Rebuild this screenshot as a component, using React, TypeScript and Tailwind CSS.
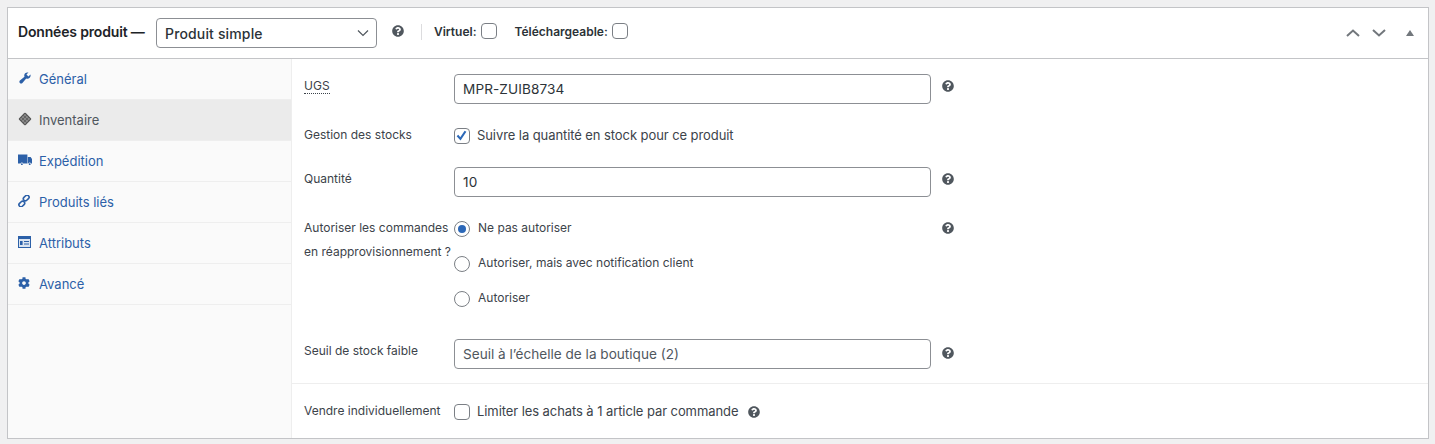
import { ReactNode } from 'react';
import { FaCog, FaQuestionCircle } from 'react-icons/fa';

const font = "font-['Inter','Liberation_Sans',sans-serif]";

function Help({ className = '' }: { className?: string }) {
  return <FaQuestionCircle className={`w-[12px] h-[12px] text-[#50575e] shrink-0 ${className}`} />;
}

function Box({ checked = false }: { checked?: boolean }) {
  return (
    <span className="relative inline-flex w-[16px] h-[16px] shrink-0 rounded-[4px] border border-[#7b7f85] bg-white">
      {checked && (
        <svg viewBox="0 0 16 16" className="absolute inset-0 w-[14px] h-[14px]">
          <path d="M2.8 7.5l3.4 3.8L12 2.6" fill="none" stroke="#2c68b8" strokeWidth="2.4" />
        </svg>
      )}
    </span>
  );
}

function Radio({ checked = false }: { checked?: boolean }) {
  return (
    <span className="flex items-center justify-center w-[16px] h-[16px] shrink-0 rounded-full border border-[#7b7f85] bg-white">
      {checked && <span className="w-[8px] h-[8px] rounded-full bg-[#2c68b8]" />}
    </span>
  );
}

function TextInput({ value, muted = false }: { value: string; muted?: boolean }) {
  return (
    <input
      readOnly
      value={value}
      className={`w-[477px] h-[30px] px-[8px] rounded-[4px] border border-[#8c8f94] bg-white text-[13.6px] outline-none ${muted ? 'text-[#50575e]' : 'text-[#2c3338] tracking-[0.1px]'}`}
    />
  );
}

function Field({ label, children, help, className = '', labelClass = '' }: { label: ReactNode; children: ReactNode; help?: boolean; className?: string; labelClass?: string }) {
  return (
    <div className={`flex items-center pl-[12px] ${className}`}>
      <label className={`w-[150px] shrink-0 text-[12px] text-[#3c434a] ${labelClass}`}>{label}</label>
      {children}
      {help && <Help className="ml-[11px] -mt-[6px]" />}
    </div>
  );
}

const WrenchIcon = (
  <svg viewBox="0 0 20 20" className="w-[14px] h-[14px]" fill="currentColor">
    <path d="M16.68 9.77c-1.34 1.34-3.3 1.67-4.95.99l-5.41 6.52c-.99.99-2.59.99-3.58 0s-.99-2.59 0-3.57l6.52-5.42c-.68-1.65-.35-3.61.99-4.95 1.28-1.28 3.12-1.62 4.72-1.06l-2.89 2.89 2.82 2.82 2.86-2.87c.53 1.58.18 3.39-1.08 4.65z" />
  </svg>
);

const InventoryIcon = (
  <svg viewBox="0 0 14 14" className="w-[14px] h-[14px]">
    <g transform="rotate(45 7 7)">
      <rect x="2.8" y="2.8" width="8.4" height="8.4" rx="0.6" fill="#8a8a8a" stroke="#555" strokeWidth="1.1" />
      <path d="M5.6 3v8M8.4 3v8M3 5.6h8M3 8.4h8" stroke="#4f4f4f" strokeWidth="0.6" />
    </g>
  </svg>
);

const TruckIcon = (
  <svg viewBox="0 0 14 12" className="w-[14px] h-[12px]" fill="currentColor">
    <path d="M0 0.5h9.4v9H5.2a1.4 1.4 0 0 0-2.6 0H0z" />
    <path d="M9.8 3H12.6L14 5V9.5h-1a1.4 1.4 0 0 0-2.6 0h-.6z" />
    <circle cx="3.9" cy="10.2" r="0.9" />
    <circle cx="11.7" cy="10.2" r="0.9" />
  </svg>
);

const LinkIcon = (
  <svg viewBox="0 0 12 12" className="w-[12px] h-[12px]" fill="none" stroke="currentColor" strokeWidth="1.6">
    <rect x="5" y="1" width="6.4" height="4" rx="2" transform="rotate(-45 8.2 3)" />
    <rect x="0.6" y="7" width="6.4" height="4" rx="2" transform="rotate(-45 3.8 9)" />
  </svg>
);

const AttributesIcon = (
  <svg viewBox="0 0 13 12" className="w-[13px] h-[12px]">
    <path d="M0 0h13v12H0z" fill="currentColor" />
    <path d="M1 3h11v8H1z" fill="#dbe4f0" />
    <path d="M2 5h2.6v4H2zM6 5h5v1H6zM6 7.6h5v1H6z" fill="currentColor" />
  </svg>
);

const tabs = [
  { name: 'Général', icon: WrenchIcon },
  { name: 'Inventaire', icon: InventoryIcon, active: true },
  { name: 'Expédition', icon: TruckIcon },
  { name: 'Produits liés', icon: LinkIcon },
  { name: 'Attributs', icon: AttributesIcon },
  { name: 'Avancé', icon: <FaCog className="w-[12px] h-[12px]" /> },
];

export default function App() {
  return (
    <div className={`w-[1435px] h-[444px] bg-[#f0f0f1] pt-[7px] pl-[7px] ${font}`}>
      <div className="w-[1422px] h-[432px] flex flex-col border border-[#c3c4c7] bg-white">
        <header className="h-[51px] shrink-0 flex items-center border-b border-[#c3c4c7] pl-[10px] pr-[14px]">
          <h2 className="text-[14px] font-semibold tracking-[-0.17px] text-[#1d2327] w-[138px] -mt-[4px]">Données produit —</h2>
          <div className="relative w-[221px] h-[30px]">
            <select className="w-full h-full pl-[8px] appearance-none rounded-[4px] border border-[#8c8f94] bg-white text-[14px] font-medium tracking-[0.15px] text-[#2c3338] outline-none">
              <option>Produit simple</option>
            </select>
            <svg viewBox="0 0 12 8" className="absolute right-[8px] top-[11px] w-[12px] h-[8px] pointer-events-none">
              <path d="M1 1.5l5 5 5-5" fill="none" stroke="#50575e" strokeWidth="1.2" />
            </svg>
          </div>
          <Help className="ml-[15px] -mt-[5px]" />
          <span className="ml-[17px] h-[16px] -mt-[2px] border-l border-[#dcdcde]" />
          <span className="ml-[12px] text-[12px] font-semibold text-[#2c3338] -mt-[3px]">Virtuel:</span>
          <span className="ml-[4px] -mt-[1px]"><Box /></span>
          <span className="ml-[18px] text-[12px] font-semibold text-[#2c3338] -mt-[3px]">Téléchargeable:</span>
          <span className="ml-[4px] -mt-[1px]"><Box /></span>
          <div className="ml-auto flex items-center -mt-[1px]">
            <svg viewBox="0 0 14 8" className="w-[14px] h-[8px]"><path d="M1 7l6-5.5L13 7" fill="none" stroke="#72777c" strokeWidth="2" /></svg>
            <svg viewBox="0 0 14 8" className="ml-[12px] w-[14px] h-[8px]"><path d="M1 1l6 5.5L13 1" fill="none" stroke="#72777c" strokeWidth="2" /></svg>
            <svg viewBox="0 0 8 6" className="ml-[20px] w-[8px] h-[6px]"><path d="M4 0l4 6H0z" fill="#72777c" /></svg>
          </div>
        </header>

        <div className="flex flex-1 min-h-0">
          <nav className="w-[284px] shrink-0 bg-[#fafafa] border-r border-[#eeeeee]">
            {tabs.map((tab) => (
              <div
                key={tab.name}
                className={`h-[41px] flex items-center border-b border-[#eeeeee] text-[13px] ${tab.active ? 'bg-[#ebebeb] text-[#50575e]' : 'text-[#2c60a8]'}`}
              >
                <span className={`w-[31px] pl-[10px] flex -mt-[3px] shrink-0 ${tab.active ? 'text-[#555]' : 'text-[#2c60a8]'}`}>{tab.icon}</span>
                <span className="mt-[1px]">{tab.name}</span>
              </div>
            ))}
          </nav>

          <main className="flex-1 min-w-0 flex flex-col">
            <section className="h-[325px] shrink-0 border-b border-[#eeeeee] pt-[15px]">
              <Field label={<span className="border-b border-dotted border-[#3c434a] leading-[14px] inline-block">UGS</span>} help labelClass="-mt-[6px]">
                <TextInput value="MPR-ZUIB8734" />
              </Field>
              <Field label="Gestion des stocks" className="mt-[23px] h-[17px]" labelClass="-mt-[2px]">
                <Box checked />
                <span className="ml-[7px] text-[13px] text-[#3c434a] tracking-[-0.08px]">Suivre la quantité en stock pour ce produit</span>
              </Field>
              <Field label="Quantité" help className="mt-[23px]" labelClass="-mt-[6px]">
                <TextInput value="10" />
              </Field>
              <div className="flex items-start pl-[12px] mt-[14px]">
                <label className="w-[150px] shrink-0 pt-[5px] text-[12px] leading-[24px] text-[#3c434a]">
                  Autoriser les commandes<br />en réapprovisionnement ?
                </label>
                <div className="w-[477px] flex flex-col text-[12px] text-[#3c434a]">
                  {[
                    { text: 'Ne pas autoriser', checked: true },
                    { text: 'Autoriser, mais avec notification client' },
                    { text: 'Autoriser' },
                  ].map((o) => (
                    <div key={o.text} className="h-[35px] flex items-center">
                      <Radio checked={o.checked} />
                      <span className="ml-[8px] -mt-[1px]">{o.text}</span>
                    </div>
                  ))}
                </div>
                <Help className="ml-[11px] mt-[11px]" />
              </div>
              <Field label="Seuil de stock faible" className="mt-[23px]" labelClass="-mt-[7px]">
                <TextInput value="Seuil à l’échelle de la boutique (2)" muted />
                <Help className="ml-[11px] -mt-[3px]" />
              </Field>
            </section>
            <section className="flex-1">
              <Field label="Vendre individuellement" className="h-full pt-[1px]" labelClass="-mt-[2px]">
                <Box />
                <span className="ml-[7px] text-[13px] text-[#3c434a] tracking-[-0.08px]">Limiter les achats à 1 article par commande</span>
                <Help className="ml-[10px]" />
              </Field>
            </section>
          </main>
        </div>
      </div>
    </div>
  );
}
